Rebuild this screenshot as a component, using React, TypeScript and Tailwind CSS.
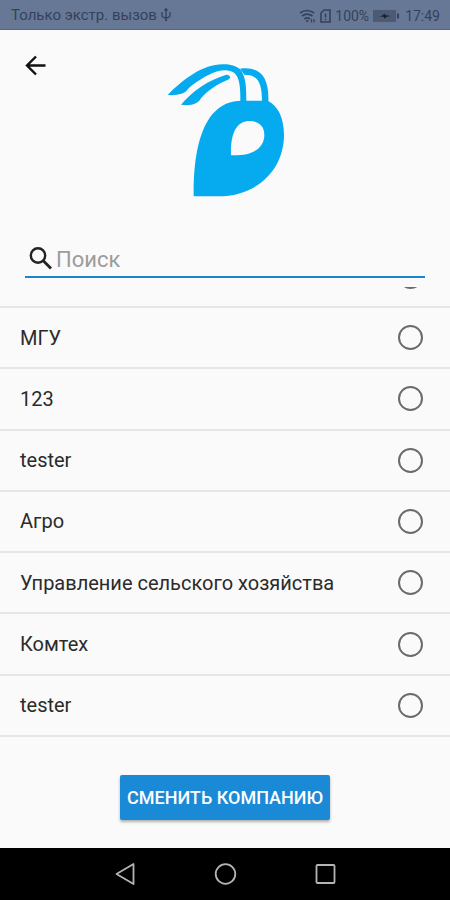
import { useState } from 'react'

const companies = [
  { id: 'mgu', name: 'МГУ' },
  { id: '123', name: '123' },
  { id: 'tester-1', name: 'tester' },
  { id: 'agro', name: 'Агро' },
  { id: 'selhoz', name: 'Управление сельского хозяйства' },
  { id: 'komteh', name: 'Комтех' },
  { id: 'tester-2', name: 'tester' },
]

const radio =
  'h-[25px] w-[25px] shrink-0 appearance-none rounded-full border-2 border-[#6b6b6b] checked:border-[7px] checked:border-[#1a8ad6]'

function StatusBar() {
  return (
    <div className="flex h-[30px] shrink-0 items-center justify-between border-b border-[#566787] bg-[#667896] pt-0.5 pr-2.5 pl-[11px] text-sm text-[#35415a]">
      <div className="flex items-center gap-1">
        <span className="text-[15px]">Только экстр. вызов</span>
        <svg viewBox="0 0 10 14" className="h-3.5 w-2.5" fill="none" stroke="currentColor" strokeWidth="1.3">
          <path d="M5 13V1M1 4v3.5q0 2 4 2.5M9 4v3.5q0 2-4 2.5M3.5 2.5 5 .8l1.500 1.700" />
          <circle cx="5" cy="12.300" r="1" fill="currentColor" stroke="none" />
        </svg>
      </div>
      <div className="flex items-center gap-1">
        <svg viewBox="0 0 17 14" className="h-3.5 w-[17px]" fill="none" stroke="currentColor" strokeWidth="1.7">
          <path d="M1 4q7-5 14 0M3 7q5-3.800 10.500 0M5.500 10q2.700-2.200 5.500 0" />
          <path d="M6.500 11.200h3.500L8.200 13.500z" fill="currentColor" stroke="none" />
          <path d="M12.500 10v3.500M15 10v3.500" strokeWidth="1.2" />
        </svg>
        <svg viewBox="0 0 11 14" className="h-3.5 w-[11px]" fill="none" stroke="currentColor" strokeWidth="1.6">
          <path d="M1 4 4 1h6v12H1zM5.500 4.500v4M5.500 9.800v1.400" />
        </svg>
        <span>100%</span>
        <svg viewBox="0 0 26 12" className="h-3 w-[26px]">
          <path d="M0 0h23v12H0z" fill="#4c5a73" />
          <path d="M24 3.500h2v5h-2z" fill="currentColor" />
          <path d="M5.500 6h3L12 3.500v1.500l5.500 1-3 .500L11 8.500V7z" fill="#17202f" />
        </svg>
        <span className="ml-0.5">17:49</span>
      </div>
    </div>
  )
}

function Logo() {
  return (
    <svg viewBox="36 24 354 402" className="h-[134px] w-[118px]" fill="#06aaee" role="img" aria-label="Логотип">
      <path
        fillRule="evenodd"
        d="M116 424C115 300 136 222 172 178C198 148 226 137 262 137H338C370 152 387 190 387 240C387 345 305 424 190 424ZM228 301C226 232 246 198 284 198C311 198 328 213 328 239C328 280 292 303 228 301Z"
      />
      <path d="M38 120C85 72 145 27 205 28C228 28 243 34 255 42C273 65 274 95 274 140H256C257 92 252 65 238 54C218 39 188 46 160 60C132 75 112 88 98 103C90 118 62 122 38 120Z" />
      <path d="M255 41C312 34 343 62 340 140H321C321 80 307 59 268 59Z" />
      <path d="M78 149C112 108 162 74 214 59Q223 58 226 67L222 73C186 87 155 110 138 130C128 149 104 153 78 149Z" />
    </svg>
  )
}

function NavBar() {
  return (
    <nav className="flex h-[52px] shrink-0 items-center justify-center gap-[76px] bg-black text-[#b4b4b4]">
      <button type="button" aria-label="Назад">
        <svg viewBox="0 0 24 24" className="h-6 w-6" fill="none" stroke="currentColor" strokeWidth="1.8">
          <path d="M20.500 2v20L3.500 12z" strokeLinejoin="round" />
        </svg>
      </button>
      <button type="button" aria-label="Домой">
        <svg viewBox="0 0 24 24" className="h-6 w-6" fill="none" stroke="currentColor" strokeWidth="1.8">
          <circle cx="12.500" cy="12" r="9.800" />
        </svg>
      </button>
      <button type="button" aria-label="Недавние">
        <svg viewBox="0 0 24 24" className="h-6 w-6" fill="none" stroke="currentColor" strokeWidth="1.8">
          <rect x="3.500" y="3" width="18" height="18" rx="1" />
        </svg>
      </button>
    </nav>
  )
}

export default function App() {
  const [query, setQuery] = useState('')
  const [selected, setSelected] = useState('')

  const visible = companies.filter((company) => company.name.toLowerCase().includes(query.toLowerCase()))

  return (
    <div className="flex min-h-screen flex-col bg-[#fafafa] font-['Roboto','Noto_Sans',sans-serif] text-[#2b2b2b]">
      <StatusBar />

      <header className="grid grid-cols-[1fr_auto_1fr] items-start pt-[33px] pl-0.5">
        <button type="button" aria-label="Назад" className="ml-[22px] -mt-2.5 w-6">
          <svg viewBox="0 0 24 24" className="h-6 w-6" fill="none" stroke="#111" strokeWidth="2.400">
            <path d="M21.500 12.500H3.500M12 3.500l-9 9 9 9" />
          </svg>
        </button>
        <Logo />
      </header>

      <label className="mx-[25px] mt-[45px] flex h-9 items-center gap-[3px] border-b-2 border-[#1a84cc] pl-1">
        <svg viewBox="0 0 24 24" className="h-6 w-6 shrink-0" fill="none" stroke="#222" strokeWidth="2.400">
          <circle cx="9" cy="8.500" r="7.200" />
          <path d="m14 13.500 8 8" strokeWidth="2.800" />
        </svg>
        <input
          type="text"
          aria-label="Поиск"
          placeholder="Поиск"
          value={query}
          onChange={(event) => setQuery(event.target.value)}
          className="min-w-0 flex-1 bg-transparent pt-0.5 text-[22px] leading-8 outline-none placeholder:text-[#9c9c9c]"
        />
      </label>

      <ul className="mt-[9px] flex flex-1 flex-col">
        {/* row scrolled mostly out of view */}
        <li className="flex h-[21px] shrink-0 items-end justify-end overflow-hidden border-b-2 border-[#e6e6e6] pr-[27px] pb-[17px]">
          <input type="radio" name="company" aria-label="Компания" className={radio} />
        </li>
        {visible.map((company) => (
          <li key={company.id} className="flex flex-1 border-b-2 border-[#e6e6e6]">
            <label className="flex flex-1 items-center justify-between pr-[27px] pl-5 text-xl">
              {company.name}
              <input
                type="radio"
                name="company"
                checked={selected === company.id}
                onChange={() => setSelected(company.id)}
                className={radio}
              />
            </label>
          </li>
        ))}
      </ul>

      <div className="flex justify-center pt-[38px] pb-7">
        <button
          type="button"
          className="h-[45px] rounded-xs bg-[#1a8ad6] px-[7px] text-lg font-medium text-white shadow-[0_2px_3px_rgba(0,0,0,0.3)]"
        >
          СМЕНИТЬ КОМПАНИЮ
        </button>
      </div>

      <NavBar />
    </div>
  )
}
